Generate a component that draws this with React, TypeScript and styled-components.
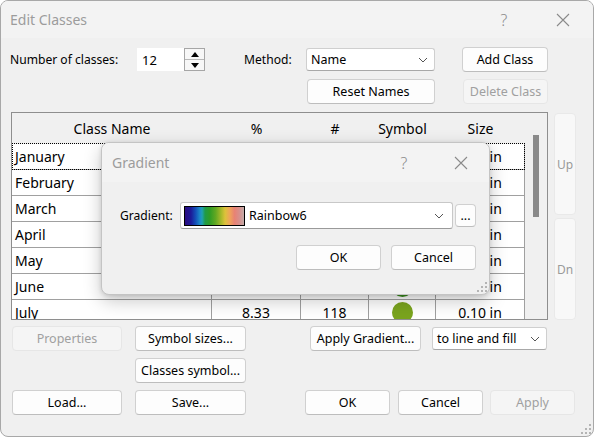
import React from "react";
import styled, { createGlobalStyle } from "styled-components";

const GlobalStyle = createGlobalStyle`
  html, body {
    margin: 0;
    padding: 0;
    background: #ffffff;
  }
  * {
    box-sizing: border-box;
  }
`;

const font = `"Noto Sans", "Open Sans", sans-serif`;

interface ClassRow {
    name: string;
    percent: string;
    count: number;
    color: string;
    size: string;
}

const rows: ClassRow[] = [
    { name: "January", percent: "8.33", count: 124, color: "#2a1585", size: "0.10 in" },
    { name: "February", percent: "8.33", count: 97, color: "#1740a8", size: "0.10 in" },
    { name: "March", percent: "8.33", count: 131, color: "#1a78c4", size: "0.10 in" },
    { name: "April", percent: "8.33", count: 105, color: "#22a0c8", size: "0.10 in" },
    { name: "May", percent: "8.33", count: 112, color: "#20985a", size: "0.10 in" },
    { name: "June", percent: "8.33", count: 126, color: "#3a8c1e", size: "0.10 in" },
    { name: "July", percent: "8.33", count: 118, color: "#7aa41e", size: "0.10 in" },
];

const Window = styled.div`
  position: relative;
  width: 594px;
  height: 437px;
  border: 1px solid #a8a8a8;
  border-radius: 8px;
  background: #f0f0f0;
  overflow: hidden;
  font-family: ${font};
  font-size: 12.5px;
  color: #000;
`;

const TitleBar = styled.div<{ $h: number; $pl: number }>`
  display: flex;
  align-items: center;
  height: ${(p) => p.$h}px;
  padding-left: ${(p) => p.$pl}px;
  background: #f3f3f3;
`;

const Title = styled.div`
  flex: 1;
  font-size: 14px;
  color: #9c9c9c;
`;

const TitleIcon = styled.div<{ $w: number; $ml?: number; $mr?: number }>`
  width: ${(p) => p.$w}px;
  margin-left: ${(p) => p.$ml ?? 0}px;
  margin-right: ${(p) => p.$mr ?? 0}px;
  display: flex;
  justify-content: center;
  align-items: center;
  color: #8a8a8a;
  font-size: 16px;
  font-weight: 300;
`;

const TopGrid = styled.div`
  display: grid;
  grid-template-columns: 127px 68px 39px 62px 129px 27px 86px;
  grid-template-rows: 25px 25px;
  row-gap: 7px;
  margin-top: 9px;
  padding-left: 9px;
  align-items: center;
`;

const Label = styled.span<{ $w?: number }>`
  white-space: nowrap;
  font-size: 12.1px;
  width: ${(p) => (p.$w ? `${p.$w}px` : "auto")};
`;

const Button = styled.button<{ $w?: number; $h?: number; $ml?: number; $disabled?: boolean }>`
  width: ${(p) => (p.$w ? `${p.$w}px` : "100%")};
  height: ${(p) => p.$h ?? 25}px;
  margin-left: ${(p) => p.$ml ?? 0}px;
  padding: 0;
  flex-shrink: 0;
  font-family: ${font};
  font-size: 12.5px;
  color: ${(p) => (p.$disabled ? "#a0a0a0" : "#000")};
  background: ${(p) => (p.$disabled ? "#f5f5f5" : "#fdfdfd")};
  border: 1px solid ${(p) => (p.$disabled ? "#e6e6e6" : "#d0d0d0")};
  border-bottom-color: ${(p) => (p.$disabled ? "#e6e6e6" : "#bdbdbd")};
  border-radius: 4px;
`;

const Spinner = styled.div`
  display: flex;
  height: 23px;
  width: 68px;
`;

const SpinField = styled.div`
  flex: 1;
  background: #fff;
  padding-left: 5px;
  display: flex;
  align-items: center;
  font-size: 13px;
`;

const SpinButtons = styled.div`
  width: 21px;
  display: flex;
  flex-direction: column;
  border: 1px solid #a6a6a6;
  background: #f7f7f7;
`;

const SpinHalf = styled.div<{ $top?: boolean }>`
  flex: 1;
  display: flex;
  align-items: center;
  justify-content: center;
  border-bottom: ${(p) => (p.$top ? "1px solid #b8b8b8" : "none")};
`;

const Select = styled.div<{ $w?: number; $ml?: number }>`
  width: ${(p) => (p.$w ? `${p.$w}px` : "100%")};
  height: 23px;
  margin-left: ${(p) => p.$ml ?? 0}px;
  flex-shrink: 0;
  display: flex;
  align-items: center;
  justify-content: space-between;
  padding: 0 6px 0 4px;
  background: #fff;
  border: 1px solid #cfcfcf;
  border-bottom-color: #a8a8a8;
  border-radius: 3px;
  font-size: 12.5px;
`;

const Middle = styled.div`
  display: flex;
  margin-top: 8px;
  margin-left: 10px;
  gap: 6px;
`;

const Table = styled.div`
  width: 537px;
  height: 208px;
  border: 1px solid #8e8e8e;
  display: flex;
  overflow: hidden;
  background: #f0f0f0;
`;

const Grid = styled.div`
  position: relative;
  display: grid;
  grid-template-columns: 200px 89px 68px 67px 89px;
  grid-template-rows: 31px;
  grid-auto-rows: 26px;
  font-size: 14px;
  align-self: flex-start;
`;

const HeadCell = styled.div`
  display: flex;
  align-items: center;
  justify-content: center;
  background: #f0f0f0;
`;

const Cell = styled.div<{ $left?: boolean }>`
  display: flex;
  align-items: center;
  justify-content: ${(p) => (p.$left ? "flex-start" : "center")};
  padding-left: ${(p) => (p.$left ? 3 : 0)}px;
  background: #fff;
  border-right: 1px solid #a0a0a0;
  border-bottom: 1px solid #a0a0a0;
  white-space: nowrap;
`;

/* focus rectangle drawn over the selected first row */
const FocusRow = styled.div`
  position: absolute;
  left: 0;
  top: 30px;
  width: 513px;
  height: 27px;
  border: 1px dotted #000;
  pointer-events: none;
`;

const Dot = styled.div<{ $color: string }>`
  width: 21px;
  height: 21px;
  border-radius: 50%;
  background: ${(p) => p.$color};
`;

const ScrollTrack = styled.div`
  width: 22px;
  padding: 22px 0 0 8px;
`;

const ScrollThumb = styled.div`
  width: 6px;
  height: 82px;
  background: #8a8a8a;
`;

const SideButtons = styled.div`
  display: flex;
  flex-direction: column;
  gap: 3px;
  padding-top: 1px;
`;

const SideButton = styled.div`
  width: 22px;
  height: 102px;
  display: flex;
  align-items: center;
  justify-content: center;
  background: #f8f8f8;
  border: 1px solid #e9e9e9;
  border-radius: 4px;
  color: #9a9a9a;
  font-size: 12px;
`;

const ButtonRow = styled.div<{ $mt: number }>`
  display: flex;
  align-items: center;
  height: 25px;
  margin-top: ${(p) => p.$mt}px;
`;

const Popup = styled.div`
  position: absolute;
  left: 100px;
  top: 141px;
  width: 389px;
  height: 153px;
  background: #f0f0f0;
  border: 1px solid #c4c4c4;
  border-radius: 8px;
  overflow: hidden;
  box-shadow: 0 6px 18px rgba(0, 0, 0, 0.22), 0 1px 4px rgba(0, 0, 0, 0.12);
`;

const PopupRow = styled.div<{ $mt: number; $end?: boolean }>`
  display: flex;
  align-items: center;
  margin-top: ${(p) => p.$mt}px;
  padding: ${(p) => (p.$end ? "0 13px 0 0" : "0 0 0 18px")};
  justify-content: ${(p) => (p.$end ? "flex-end" : "flex-start")};
  gap: ${(p) => (p.$end ? 10 : 0)}px;
`;

const GradientCombo = styled.div`
  width: 273px;
  height: 27px;
  display: flex;
  align-items: center;
  padding: 0 8px 0 3px;
  background: #fff;
  border: 1px solid #c8c8c8;
  border-bottom-color: #9a9a9a;
  border-radius: 3px;
`;

const Swatch = styled.div`
  width: 61px;
  height: 20px;
  border: 1px solid #000;
  margin-right: 4px;
  background: linear-gradient(
    to right,
    #2a0c80 0%,
    #1c1a98 10%,
    #1450b8 18%,
    #1c88c8 25%,
    #20a0b0 29%,
    #1f9a48 34%,
    #2f9c25 42%,
    #62a822 52%,
    #a6b82a 61%,
    #ddc23a 68%,
    #efa45a 76%,
    #e88274 84%,
    #d88f8c 92%,
    #c2aba8 100%
  );
`;

const ComboText = styled.span`
  flex: 1;
  font-size: 12.5px;
`;

const Grip = styled.svg`
  position: absolute;
  right: 2px;
  bottom: 2px;
`;

const Chevron = () => (
    <svg width="10" height="6" viewBox="0 0 10 6">
        <path d="M1 1 L5 5 L9 1" fill="none" stroke="#555" strokeWidth="1" />
    </svg>
);

const CloseIcon = () => (
    <svg width="14" height="14" viewBox="0 0 14 14">
        <path d="M1 1 L13 13 M13 1 L1 13" stroke="#8a8a8a" strokeWidth="1.1" fill="none" />
    </svg>
);

const GripIcon = () => (
    <Grip width="10" height="10" viewBox="0 0 10 10">
        {[
            [8, 0],
            [8, 4],
            [4, 4],
            [8, 8],
            [4, 8],
            [0, 8],
        ].map(([x, y], i) => (
            <rect key={i} x={x} y={y} width="2" height="2" fill="#b4b4b4" />
        ))}
    </Grip>
);

const App = () => {
    return (
        <>
            <GlobalStyle />
            <Window>
                <TitleBar $h={37} $pl={9}>
                    <Title>Edit Classes</Title>
                    <TitleIcon $w={28}>?</TitleIcon>
                    <TitleIcon $w={30} $ml={30} $mr={15}>
                        <CloseIcon />
                    </TitleIcon>
                </TitleBar>

                <TopGrid>
                    <Label>Number of classes:</Label>
                    <Spinner>
                        <SpinField>12</SpinField>
                        <SpinButtons>
                            <SpinHalf $top>
                                <svg width="8" height="5" viewBox="0 0 8 5">
                                    <path d="M0 5 L4 0 L8 5 Z" fill="#000" />
                                </svg>
                            </SpinHalf>
                            <SpinHalf>
                                <svg width="8" height="5" viewBox="0 0 8 5">
                                    <path d="M0 0 L4 5 L8 0 Z" fill="#000" />
                                </svg>
                            </SpinHalf>
                        </SpinButtons>
                    </Spinner>
                    <span />
                    <Label>Method:</Label>
                    <Select>
                        <span>Name</span>
                        <Chevron />
                    </Select>
                    <span />
                    <Button>Add Class</Button>

                    <span style={{ gridColumn: "1 / span 4" }} />
                    <Button $ml={1} $w={128}>Reset Names</Button>
                    <span />
                    <Button $ml={1} $w={85} $disabled>Delete Class</Button>
                </TopGrid>

                <Middle>
                    <Table>
                        <Grid>
                            <HeadCell>Class Name</HeadCell>
                            <HeadCell>%</HeadCell>
                            <HeadCell>#</HeadCell>
                            <HeadCell>Symbol</HeadCell>
                            <HeadCell>Size</HeadCell>
                            {rows.map((row) => (
                                <React.Fragment key={row.name}>
                                    <Cell $left>{row.name}</Cell>
                                    <Cell>{row.percent}</Cell>
                                    <Cell>{row.count}</Cell>
                                    <Cell>
                                        <Dot $color={row.color} />
                                    </Cell>
                                    <Cell>{row.size}</Cell>
                                </React.Fragment>
                            ))}
                            <FocusRow />
                        </Grid>
                        <ScrollTrack>
                            <ScrollThumb />
                        </ScrollTrack>
                    </Table>
                    <SideButtons>
                        <SideButton>Up</SideButton>
                        <SideButton>Dn</SideButton>
                    </SideButtons>
                </Middle>

                <ButtonRow $mt={6}>
                    <Button $w={110} $ml={11} $disabled>Properties</Button>
                    <Button $w={111} $ml={13}>Symbol sizes...</Button>
                    <Button $w={111} $ml={64}>Apply Gradient...</Button>
                    <Select $w={115} $ml={11}>
                        <span>to line and fill</span>
                        <Chevron />
                    </Select>
                </ButtonRow>
                <ButtonRow $mt={7}>
                    <Button $w={111} $ml={134}>Classes symbol...</Button>
                </ButtonRow>
                <ButtonRow $mt={7}>
                    <Button $w={110} $ml={11}>Load...</Button>
                    <Button $w={111} $ml={13}>Save...</Button>
                    <Button $w={85} $ml={59}>OK</Button>
                    <Button $w={85} $ml={8}>Cancel</Button>
                    <Button $w={85} $ml={7} $disabled>Apply</Button>
                </ButtonRow>
                <GripIcon />

                <Popup>
                    <TitleBar $h={39} $pl={10}>
                        <Title>Gradient</Title>
                        <TitleIcon $w={20}>?</TitleIcon>
                        <TitleIcon $w={20} $ml={37} $mr={18}>
                            <CloseIcon />
                        </TitleIcon>
                    </TitleBar>
                    <PopupRow $mt={20}>
                        <Label $w={60}>Gradient:</Label>
                        <GradientCombo>
                            <Swatch />
                            <ComboText>Rainbow6</ComboText>
                            <Chevron />
                        </GradientCombo>
                        <Button $w={21} $h={23} $ml={2}>...</Button>
                    </PopupRow>
                    <PopupRow $mt={16} $end>
                        <Button $w={85}>OK</Button>
                        <Button $w={85}>Cancel</Button>
                    </PopupRow>
                    <GripIcon />
                </Popup>
            </Window>
        </>
    );
};

export default App;
